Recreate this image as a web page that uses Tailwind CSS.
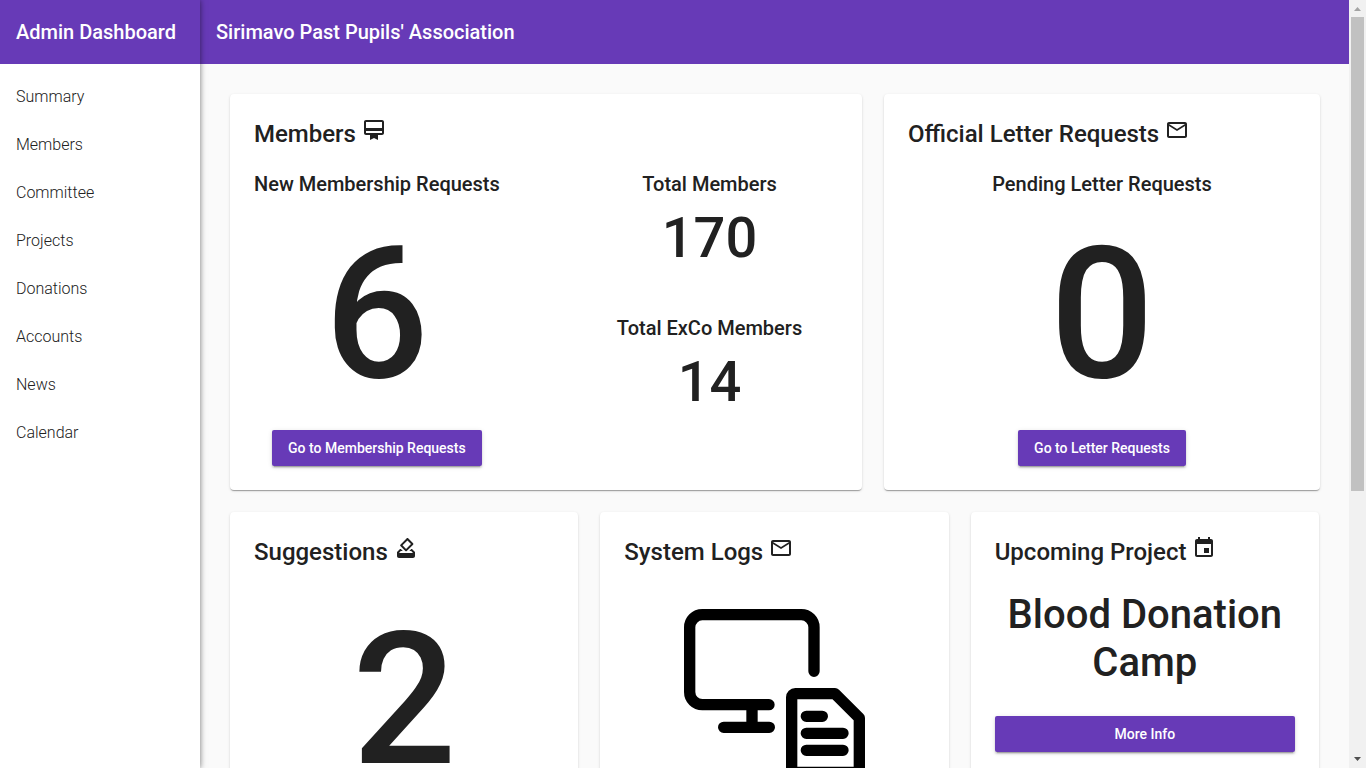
<!DOCTYPE html>
<html lang="en">
<head>
<meta charset="utf-8">
<meta name="viewport" content="width=device-width, initial-scale=1">
<title>Admin Dashboard</title>
<script src="https://cdn.jsdelivr.net/npm/@tailwindcss/browser@4"></script>
</head>
<body class="flex h-screen overflow-hidden bg-[#fafafa] font-['Roboto',sans-serif] text-[#212121]">

<aside class="z-10 w-[200px] shrink-0 bg-white shadow-[0_0_6px_rgba(0,0,0,0.55)]">
  <div class="flex h-16 items-center bg-[#673ab7] px-4 text-xl font-medium text-white">Admin Dashboard</div>
  <nav class="flex flex-col pt-[9px] font-light" aria-label="Main">
    <a href="#summary" class="px-4 leading-[48px]">Summary</a>
    <a href="#members" class="px-4 leading-[48px]">Members</a>
    <a href="#committee" class="px-4 leading-[48px]">Committee</a>
    <a href="#projects" class="px-4 leading-[48px]">Projects</a>
    <a href="#donations" class="px-4 leading-[48px]">Donations</a>
    <a href="#accounts" class="px-4 leading-[48px]">Accounts</a>
    <a href="#news" class="px-4 leading-[48px]">News</a>
    <a href="#calendar" class="px-4 leading-[48px]">Calendar</a>
  </nav>
</aside>

<div class="min-w-0 flex-1">
  <header class="flex h-16 items-center bg-[#673ab7] px-4 text-xl font-medium text-white">
    <h1>Sirimavo Past Pupils' Association</h1>
  </header>

  <main class="flex flex-col gap-[22px] py-[30px] pr-[29px] pl-[30px]">
    <div class="grid grid-cols-[632fr_436fr] gap-[22px]">
      <section class="rounded-sm bg-white p-6 shadow-[0_2px_1px_-1px_rgba(0,0,0,0.2),0_1px_1px_0_rgba(0,0,0,0.14),0_1px_3px_0_rgba(0,0,0,0.12)]">
        <h2 class="text-2xl leading-8 font-medium">Members
          <svg class="inline size-6 align-baseline" viewBox="0 0 24 24" fill="currentColor" aria-hidden="true"><path d="M20 2H4c-1.11 0-2 .89-2 2v11c0 1.11.89 2 2 2h4v5l4-2 4 2v-5h4c1.11 0 2-.89 2-2V4c0-1.11-.89-2-2-2zm0 13H4v-2h16v2zm0-5H4V4h16v6z"/></svg>
        </h2>
        <div class="mt-5 flex justify-between text-center">
          <div>
            <h3 class="text-xl leading-7 font-medium">New Membership Requests</h3>
            <p class="mt-6 text-[184px] leading-none font-medium">6</p>
            <button type="button" class="mt-6 h-9 rounded-xs bg-[#673ab7] px-4 text-sm font-medium text-white shadow-[0_3px_1px_-2px_rgba(0,0,0,0.2),0_2px_2px_0_rgba(0,0,0,0.14),0_1px_5px_0_rgba(0,0,0,0.12)]">Go to Membership Requests</button>
          </div>
          <div class="w-[44%]">
            <h3 class="text-xl leading-7 font-medium">Total Members</h3>
            <p class="mt-3 text-[56px] leading-[56px] font-medium">170</p>
            <h3 class="mt-12 text-xl leading-7 font-medium">Total ExCo Members</h3>
            <p class="mt-3 text-[56px] leading-[56px] font-medium">14</p>
          </div>
        </div>
      </section>

      <section class="rounded-sm bg-white p-6 shadow-[0_2px_1px_-1px_rgba(0,0,0,0.2),0_1px_1px_0_rgba(0,0,0,0.14),0_1px_3px_0_rgba(0,0,0,0.12)]">
        <h2 class="text-2xl leading-8 font-medium">Official Letter Requests
          <svg class="inline size-6 align-baseline" viewBox="0 0 24 24" fill="currentColor" aria-hidden="true"><path d="M22 6c0-1.100-.9-2-2-2H4c-1.100 0-2 .9-2 2v12c0 1.100.9 2 2 2h16c1.100 0 2-.9 2-2V6zm-2 0l-8 5-8-5h16zm0 12H4V8l8 5 8-5v10z"/></svg>
        </h2>
        <div class="mt-5 text-center">
          <h3 class="text-xl leading-7 font-medium">Pending Letter Requests</h3>
          <p class="mt-6 text-[184px] leading-none font-medium">0</p>
          <button type="button" class="mt-6 h-9 rounded-xs bg-[#673ab7] px-4 text-sm font-medium text-white shadow-[0_3px_1px_-2px_rgba(0,0,0,0.2),0_2px_2px_0_rgba(0,0,0,0.14),0_1px_5px_0_rgba(0,0,0,0.12)]">Go to Letter Requests</button>
        </div>
      </section>
    </div>

    <div class="mr-px grid min-h-96 grid-cols-3 gap-[22px]">
      <section class="rounded-sm bg-white p-6 shadow-[0_2px_1px_-1px_rgba(0,0,0,0.2),0_1px_1px_0_rgba(0,0,0,0.14),0_1px_3px_0_rgba(0,0,0,0.12)]">
        <h2 class="text-2xl leading-8 font-medium">Suggestions
          <svg class="inline size-6 align-baseline" viewBox="0 0 24 24" fill="currentColor" aria-hidden="true"><path d="M18 13h-.68l-2 2h1.910L19 17H5l1.780-2h2.050l-2-2H6l-3 3v4c0 1.100.89 2 1.990 2H19c1.100 0 2-.89 2-2v-4l-3-3zm-1-5.050l-4.950 4.950-3.540-3.540 4.950-4.950L17 7.950zm-4.240-5.660L6.390 8.660c-.39.39-.39 1.020 0 1.410l4.950 4.950c.39.39 1.020.39 1.410 0l6.360-6.360c.39-.39.39-1.020 0-1.410L14.160 2.300c-.38-.4-1.010-.4-1.400-.01z"/></svg>
        </h2>
        <p class="mt-10 text-center text-[184px] leading-none font-medium">2</p>
      </section>

      <section class="rounded-sm bg-white p-6 shadow-[0_2px_1px_-1px_rgba(0,0,0,0.2),0_1px_1px_0_rgba(0,0,0,0.14),0_1px_3px_0_rgba(0,0,0,0.12)]">
        <h2 class="text-2xl leading-8 font-medium">System Logs
          <svg class="inline size-6 align-baseline" viewBox="0 0 24 24" fill="currentColor" aria-hidden="true"><path d="M22 6c0-1.100-.9-2-2-2H4c-1.100 0-2 .9-2 2v12c0 1.100.9 2 2 2h16c1.100 0 2-.9 2-2V6zm-2 0l-8 5-8-5h16zm0 12H4V8l8 5 8-5v10z"/></svg>
        </h2>
        <!-- Monitor with a log document -->
        <svg class="mx-auto mt-[41px] w-[181px]" viewBox="42 42 543 507" fill="none" stroke="#000" stroke-width="34" stroke-linecap="round" stroke-linejoin="round" role="img" aria-label="System logs">
          <path d="M432 229V97a38 38 0 0 0-38-38H97a38 38 0 0 0-38 38v194a38 38 0 0 0 38 38h200M246 329v68M161 397h137"/>
          <path d="M376 296h119l73 73v151a12 12 0 0 1-12 12H377a12 12 0 0 1-12-12V307a11 11 0 0 1 11-11zM409 364h48M409 415h110M409 466h110"/>
        </svg>
      </section>

      <section class="rounded-sm bg-white p-6 shadow-[0_2px_1px_-1px_rgba(0,0,0,0.2),0_1px_1px_0_rgba(0,0,0,0.14),0_1px_3px_0_rgba(0,0,0,0.12)]">
        <h2 class="text-2xl leading-8 font-medium">Upcoming Project
          <svg class="inline size-6 align-baseline" viewBox="0 0 24 24" fill="currentColor" aria-hidden="true"><path d="M17 12h-5v5h5v-5zM16 1v2H8V1H6v2H5c-1.110 0-1.990.9-1.990 2L3 19c0 1.100.89 2 2 2h14c1.100 0 2-.9 2-2V5c0-1.100-.9-2-2-2h-1V1h-2zm3 18H5V8h14v11z"/></svg>
        </h2>
        <p class="mt-[23px] text-center text-[40px] leading-[48px] font-medium">Blood Donation Camp</p>
        <button type="button" class="mt-[29px] h-9 w-full rounded-xs bg-[#673ab7] px-4 text-sm font-medium text-white shadow-[0_3px_1px_-2px_rgba(0,0,0,0.2),0_2px_2px_0_rgba(0,0,0,0.14),0_1px_5px_0_rgba(0,0,0,0.12)]">More Info</button>
      </section>
    </div>
  </main>
</div>

<!-- Scroll bar -->
<div class="flex w-[17px] shrink-0 flex-col items-center justify-between bg-[#f1f1f1]" aria-hidden="true">
  <svg class="h-[17px] w-[17px] shrink-0" viewBox="0 0 17 17" fill="#a3a3a3"><path d="M5 11h7L8.500 7z"/></svg>
  <div class="flex w-full flex-1 flex-col px-[2px]"><div class="h-[calc(65%-3px)] bg-[#c1c1c1]"></div></div>
  <svg class="h-[17px] w-[17px] shrink-0" viewBox="0 0 17 17" fill="#505050"><path d="M5 6h7l-3.500 4z"/></svg>
</div>
</body>
</html>
